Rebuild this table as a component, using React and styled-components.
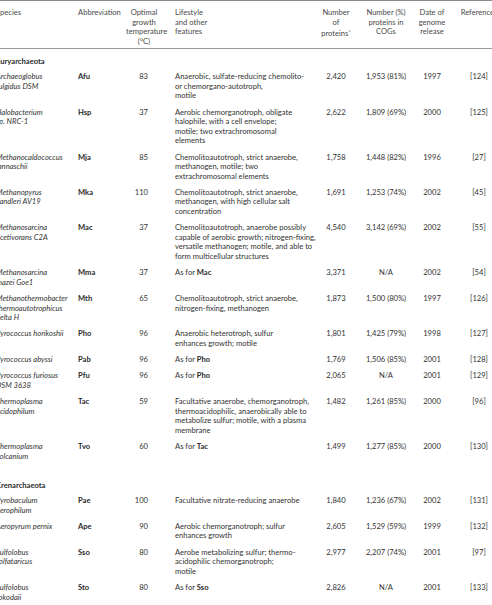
import React from "react";
import styled, { createGlobalStyle } from "styled-components";

const GlobalStyle = createGlobalStyle`
  html, body {
    margin: 0;
    padding: 0;
    background: #ffffff;
    overflow: hidden;
  }
  body {
    font-family: Lato, "Liberation Sans", sans-serif;
  }
`;

const eury = [
  { sp: ["Archaeoglobus", "fulgidus DSM"], ab: "Afu", t: "83", life: ["Anaerobic, sulfate-reducing chemolito-", "or chemorgano-autotroph,", "motile"], n: "2,420", cog: "1,953 (81%)", d: "1997", r: "[124]" },
  { sp: ["Halobacterium", "sp. NRC-1"], ab: "Hsp", t: "37", life: ["Aerobic chemorganotroph, obligate", "halophile, with a cell envelope;", "motile; two extrachromosomal", "elements"], n: "2,622", cog: "1,809 (69%)", d: "2000", r: "[125]" },
  { sp: ["Methanocaldococcus", "jannaschii"], ab: "Mja", t: "85", life: ["Chemolitoautotroph, strict anaerobe,", "methanogen, motile; two", "extrachromosomal elements"], n: "1,758", cog: "1,448 (82%)", d: "1996", r: "[27]" },
  { sp: ["Methanopyrus", "kandleri AV19"], ab: "Mka", t: "110", life: ["Chemolitoautotroph, strict anaerobe,", "methanogen, with high cellular salt", "concentration"], n: "1,691", cog: "1,253 (74%)", d: "2002", r: "[45]" },
  { sp: ["Methanosarcina", "acetivorans C2A"], ab: "Mac", t: "37", life: ["Chemolitoautotroph, anaerobe possibly", "capable of aerobic growth; nitrogen-fixing,", "versatile methanogen; motile, and able to", "form multicellular structures"], n: "4,540", cog: "3,142 (69%)", d: "2002", r: "[55]" },
  { sp: ["Methanosarcina", "mazei Goe1"], ab: "Mma", t: "37", as: "Mac", n: "3,371", cog: "N/A", d: "2002", r: "[54]" },
  { sp: ["Methanothermobacter", "thermoautotrophicus", "delta H"], ab: "Mth", t: "65", life: ["Chemolitoautotroph, strict anaerobe,", "nitrogen-fixing, methanogen"], n: "1,873", cog: "1,500 (80%)", d: "1997", r: "[126]" },
  { sp: ["Pyrococcus horikoshii"], ab: "Pho", t: "96", life: ["Anaerobic heterotroph, sulfur", "enhances growth; motile"], n: "1,801", cog: "1,425 (79%)", d: "1998", r: "[127]" },
  { sp: ["Pyrococcus abyssi"], ab: "Pab", t: "96", as: "Pho", n: "1,769", cog: "1,506 (85%)", d: "2001", r: "[128]" },
  { sp: ["Pyrococcus furiosus", "DSM 3638"], ab: "Pfu", t: "96", as: "Pho", n: "2,065", cog: "N/A", d: "2001", r: "[129]" },
  { sp: ["Thermoplasma", "acidophilum"], ab: "Tac", t: "59", life: ["Facultative anaerobe, chemorganotroph,", "thermoacidophilic, anaerobically able to", "metabolize sulfur; motile, with a plasma", "membrane"], n: "1,482", cog: "1,261 (85%)", d: "2000", r: "[96]" },
  { sp: ["Thermoplasma", "volcanium"], ab: "Tvo", t: "60", as: "Tac", n: "1,499", cog: "1,277 (85%)", d: "2000", r: "[130]" },
];

const cren = [
  { sp: ["Pyrobaculum", "aerophilum"], ab: "Pae", t: "100", life: ["Facultative nitrate-reducing anaerobe"], n: "1,840", cog: "1,236 (67%)", d: "2002", r: "[131]" },
  { sp: ["Aeropyrum pernix"], ab: "Ape", t: "90", life: ["Aerobic chemorganotroph; sulfur", "enhances growth"], n: "2,605", cog: "1,529 (59%)", d: "1999", r: "[132]" },
  { sp: ["Sulfolobus", "solfataricus"], ab: "Sso", t: "80", life: ["Aerobe metabolizing sulfur; thermo-", "acidophilic chemorganotroph;", "motile"], n: "2,977", cog: "2,207 (74%)", d: "2001", r: "[97]" },
  { sp: ["Sulfolobus", "tokodaii"], ab: "Sto", t: "80", as: "Sso", n: "2,826", cog: "N/A", d: "2001", r: "[133]" },
];

const Lines = ({ items }) =>
  items.map((line, i) => (
    <React.Fragment key={i}>
      {i > 0 && <br />}
      {line}
    </React.Fragment>
  ));

const SpeciesRow = ({ row }) => (
  <tr>
    <Cell $italic>
      <Lines items={row.sp} />
    </Cell>
    <Cell $bold>{row.ab}</Cell>
    <Cell $align="right" $padRight={14}>{row.t}</Cell>
    <Cell $padLeft={13}>
      {row.as ? (
        <>
          As for <b>{row.as}</b>
        </>
      ) : (
        <Lines items={row.life} />
      )}
    </Cell>
    <Cell $align="center">{row.n}</Cell>
    <Cell $align="center">{row.cog}</Cell>
    <Cell $align="center">{row.d}</Cell>
    <Cell $align="center">{row.r}</Cell>
  </tr>
);

const App = () => {
  return (
    <>
      <GlobalStyle />
      <Wrap>
        <Table>
          <colgroup>
            <col style={{ width: 82 }} />
            <col style={{ width: 48 }} />
            <col style={{ width: 36 }} />
            <col style={{ width: 156 }} />
            <col style={{ width: 36 }} />
            <col style={{ width: 64 }} />
            <col style={{ width: 28 }} />
            <col style={{ width: 66 }} />
          </colgroup>
          <thead>
            <tr>
              <Head>Species</Head>
              <Head>Abbreviation</Head>
              <Head $align="center">
                Optimal
                <br />
                growth
                <br />
                temperature
                <br />
                (°C)
              </Head>
              <Head $padLeft={13}>
                Lifestyle
                <br />
                and other
                <br />
                features
              </Head>
              <Head $align="center">
                Number
                <br />
                of
                <br />
                proteins<Sup>*</Sup>
              </Head>
              <Head $align="center">
                Number (%)
                <br />
                proteins in
                <br />
                COGs
              </Head>
              <Head $align="center">
                Date of
                <br />
                genome
                <br />
                release
              </Head>
              <Head $align="center">References</Head>
            </tr>
          </thead>
          <tbody>
            <tr>
              <Group colSpan={8} $top={8}>
                Euryarchaeota
              </Group>
            </tr>
            {eury.map((row) => (
              <SpeciesRow key={row.ab} row={row} />
            ))}
            <tr>
              <Group colSpan={8} $top={13}>
                Crenarchaeota
              </Group>
            </tr>
            {cren.map((row) => (
              <SpeciesRow key={row.ab} row={row} />
            ))}
          </tbody>
        </Table>
      </Wrap>
    </>
  );
};

export default App;

const Wrap = styled.div`
  width: 492px;
  height: 605px;
  overflow: hidden;
`;

const Table = styled.table`
  margin-left: -4px;
  width: 516px;
  table-layout: fixed;
  border-collapse: collapse;
  font-size: 7.6px;
  line-height: 9.56px;
  color: #333333;
`;

const Head = styled.th`
  vertical-align: top;
  font-weight: normal;
  color: #4a4a4a;
  text-align: ${(p) => p.$align || "left"};
  padding: 7px 0 2px ${(p) => p.$padLeft || 0}px;
  border-top: 1px solid #8c8c8c;
  border-bottom: 1px solid #9a9a9a;
  white-space: nowrap;
`;

const Sup = styled.span`
  font-size: 6px;
  vertical-align: 2px;
`;

const Group = styled.td`
  font-weight: bold;
  color: #2a2a2a;
  padding: ${(p) => p.$top}px 0 5.4px;
`;

const Cell = styled.td`
  vertical-align: top;
  white-space: nowrap;
  text-align: ${(p) => p.$align || "left"};
  font-style: ${(p) => (p.$italic ? "italic" : "normal")};
  font-weight: ${(p) => (p.$bold ? "bold" : "normal")};
  color: ${(p) => (p.$bold ? "#2a2a2a" : "#333333")};
  padding: 0 ${(p) => p.$padRight || 0}px 6.7px ${(p) => p.$padLeft || 0}px;
  overflow: hidden;

  b {
    color: #2a2a2a;
  }
`;
